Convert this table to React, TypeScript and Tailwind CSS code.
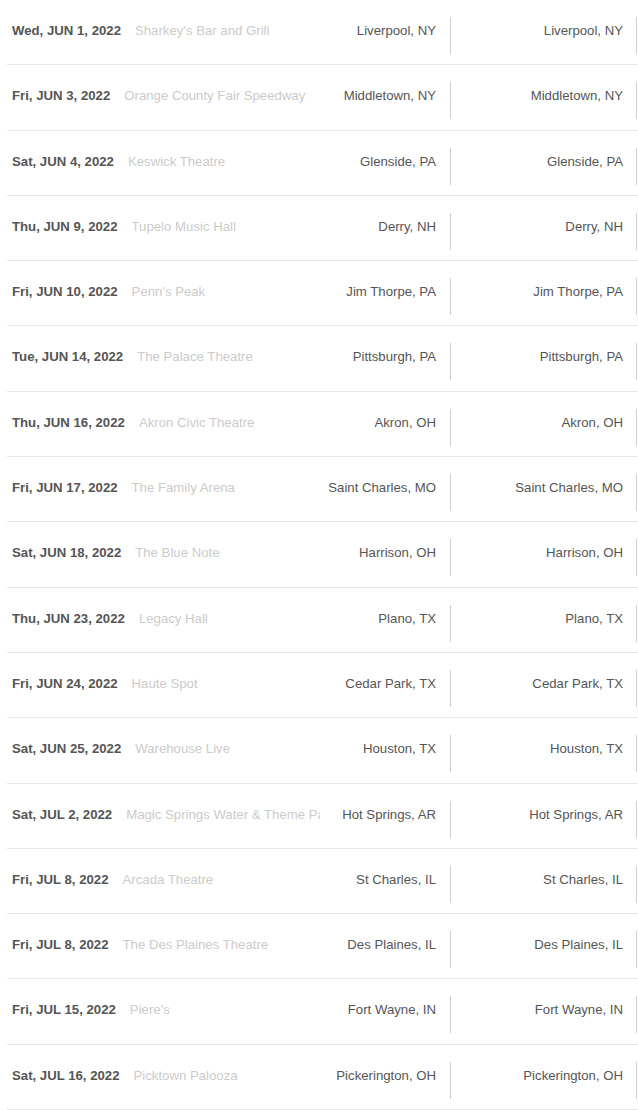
interface Show {
  date: string;
  venue: string;
  city: string;
}

const shows: Show[] = [
  { date: 'Wed, JUN 1, 2022', venue: "Sharkey's Bar and Grill", city: 'Liverpool, NY' },
  { date: 'Fri, JUN 3, 2022', venue: 'Orange County Fair Speedway', city: 'Middletown, NY' },
  { date: 'Sat, JUN 4, 2022', venue: 'Keswick Theatre', city: 'Glenside, PA' },
  { date: 'Thu, JUN 9, 2022', venue: 'Tupelo Music Hall', city: 'Derry, NH' },
  { date: 'Fri, JUN 10, 2022', venue: "Penn's Peak", city: 'Jim Thorpe, PA' },
  { date: 'Tue, JUN 14, 2022', venue: 'The Palace Theatre', city: 'Pittsburgh, PA' },
  { date: 'Thu, JUN 16, 2022', venue: 'Akron Civic Theatre', city: 'Akron, OH' },
  { date: 'Fri, JUN 17, 2022', venue: 'The Family Arena', city: 'Saint Charles, MO' },
  { date: 'Sat, JUN 18, 2022', venue: 'The Blue Note', city: 'Harrison, OH' },
  { date: 'Thu, JUN 23, 2022', venue: 'Legacy Hall', city: 'Plano, TX' },
  { date: 'Fri, JUN 24, 2022', venue: 'Haute Spot', city: 'Cedar Park, TX' },
  { date: 'Sat, JUN 25, 2022', venue: 'Warehouse Live', city: 'Houston, TX' },
  { date: 'Sat, JUL 2, 2022', venue: 'Magic Springs Water & Theme Park', city: 'Hot Springs, AR' },
  { date: 'Fri, JUL 8, 2022', venue: 'Arcada Theatre', city: 'St Charles, IL' },
  { date: 'Fri, JUL 8, 2022', venue: 'The Des Plaines Theatre', city: 'Des Plaines, IL' },
  { date: 'Fri, JUL 15, 2022', venue: "Piere's", city: 'Fort Wayne, IN' },
  { date: 'Sat, JUL 16, 2022', venue: 'Picktown Palooza', city: 'Pickerington, OH' },
];

export default function App() {
  return (
    <div className="w-[638px] bg-white font-['Liberation_Sans',Arial,sans-serif] text-[13.2px]">
      {shows.map((show, i) => (
        <div key={i} className="ml-[7px] flex h-[65.3px] border-b border-[#e6e6e6]">
          {/* date + venue, venue gets clipped at the city column */}
          <div className="flex w-[313px] shrink-0 items-start overflow-hidden whitespace-nowrap pl-[5px] pt-[23px] leading-[15px]">
            <span className="font-bold text-[#555]">{show.date}</span>
            <span className="ml-[14px] text-[#cbcbcb]">{show.venue}</span>
          </div>
          <div className="mt-[17px] flex h-[37px] w-[131px] shrink-0 justify-end whitespace-nowrap border-r border-[#d0d0d0] pr-[14px] pt-[6px] leading-[15px] text-[#555]">
            {show.city}
          </div>
          <div className="mt-[17px] flex h-[37px] w-[186px] shrink-0 justify-end whitespace-nowrap border-r border-[#d0d0d0] pr-[13px] pt-[6px] leading-[15px] text-[#555]">
            {show.city}
          </div>
        </div>
      ))}
    </div>
  );
}
